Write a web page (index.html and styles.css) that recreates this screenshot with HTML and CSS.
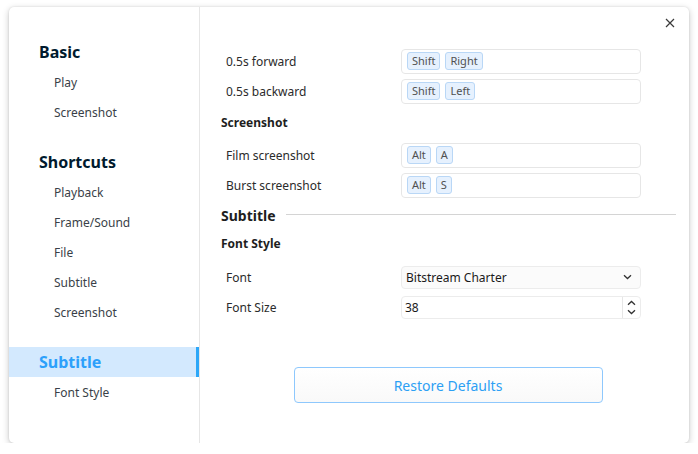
FILE: index.html
```html
<!DOCTYPE html>
<html>
<head>
<meta charset="utf-8">
<link rel="stylesheet" href="styles.css">
</head>
<body>
<div class="window">
  <nav class="sidebar">
    <div class="group">
      <div class="nav-head">Basic</div>
      <div class="nav-item">Play</div>
      <div class="nav-item">Screenshot</div>
    </div>
    <div class="group">
      <div class="nav-head">Shortcuts</div>
      <div class="nav-item">Playback</div>
      <div class="nav-item">Frame/Sound</div>
      <div class="nav-item">File</div>
      <div class="nav-item">Subtitle</div>
      <div class="nav-item">Screenshot</div>
    </div>
    <div class="group">
      <div class="nav-head active">Subtitle</div>
      <div class="nav-item">Font Style</div>
    </div>
  </nav>
  <main class="content">
    <button class="close" aria-label="Close">
      <svg width="10" height="10" viewBox="0 0 10 10"><path d="M1 1L9 9M9 1L1 9" stroke="#3a3a3a" stroke-width="1.2" fill="none"/></svg>
    </button>
    <div class="row">
      <span class="label">0.5s forward</span>
      <div class="field keys"><span class="key">Shift</span><span class="key">Right</span></div>
    </div>
    <div class="row">
      <span class="label">0.5s backward</span>
      <div class="field keys"><span class="key">Shift</span><span class="key">Left</span></div>
    </div>
    <div class="sub-head first">Screenshot</div>
    <div class="row">
      <span class="label">Film screenshot</span>
      <div class="field keys"><span class="key">Alt</span><span class="key">A</span></div>
    </div>
    <div class="row">
      <span class="label">Burst screenshot</span>
      <div class="field keys"><span class="key">Alt</span><span class="key">S</span></div>
    </div>
    <div class="section-head"><span>Subtitle</span><span class="rule"></span></div>
    <div class="sub-head">Font Style</div>
    <div class="row form">
      <span class="label">Font</span>
      <div class="field select">
        <span class="value">Bitstream Charter</span>
        <svg class="chev" width="9" height="6" viewBox="0 0 9 6"><path d="M1 1.2L4.5 4.5L8 1.2" stroke="#333" stroke-width="1.3" fill="none"/></svg>
      </div>
    </div>
    <div class="row">
      <span class="label">Font Size</span>
      <div class="field spin">
        <span class="value">38</span>
        <span class="spin-btns">
          <svg width="9" height="6" viewBox="0 0 9 6"><path d="M1 4.8L4.5 1.5L8 4.8" stroke="#333" stroke-width="1.3" fill="none"/></svg>
          <svg width="9" height="6" viewBox="0 0 9 6"><path d="M1 1.2L4.5 4.5L8 1.2" stroke="#333" stroke-width="1.3" fill="none"/></svg>
        </span>
      </div>
    </div>
    <div class="actions">
      <button class="restore">Restore Defaults</button>
    </div>
  </main>
</div>
</body>
</html>
```

FILE: styles.css
```css
* { box-sizing: border-box; }
html, body { margin: 0; padding: 0; background: #ffffff; }
body {
  font-family: "Noto Sans", "Open Sans", sans-serif;
  font-size: 12px;
  color: #303030;
}
.window {
  margin: 7px 0 0 9px;
  width: 680px;
  height: 436px;
  border-radius: 5px;
  background: #fff;
  box-shadow: 0 2px 7px rgba(0,0,0,0.22), 0 0 2px rgba(0,0,0,0.12);
  display: flex;
  overflow: hidden;
}
.sidebar {
  width: 191px;
  flex: none;
  border-right: 1px solid #e6e6e6;
  padding-top: 30px;
  display: flex;
  flex-direction: column;
  gap: 20px;
}
.nav-head {
  height: 30px;
  line-height: 30px;
  padding-left: 30px;
  font-size: 16px;
  font-weight: 700;
  color: #001a2e;
}
.nav-head.active {
  background: #d3e9fe;
  color: #2ca0fb;
  box-shadow: inset -3px 0 0 #2ca7f8;
}
.nav-item {
  height: 30px;
  line-height: 30px;
  padding-top: 1px;
  padding-left: 45px;
  font-size: 12px;
  color: #3a3f48;
}
.content {
  position: relative;
  flex: 1;
  padding: 39px 13px 0 21px;
  display: flex;
  flex-direction: column;
}
.close {
  position: absolute;
  top: 5px;
  right: 8px;
  width: 22px;
  height: 22px;
  border: 0;
  background: transparent;
  padding: 0;
  display: flex;
  align-items: center;
  justify-content: center;
}
.row {
  height: 30px;
  display: flex;
  align-items: center;
}
.row.form { margin-top: 8px; }
.label {
  width: 180px;
  padding-left: 5px;
  flex: none;
  color: #2b2b2b;
}
.field {
  width: 240px;
  border: 1px solid #e6e6e6;
  border-radius: 4px;
  background: #fff;
  display: flex;
  align-items: center;
}
.keys {
  height: 25px;
  padding-left: 5px;
  gap: 5px;
}
.key {
  height: 18px;
  line-height: 16px;
  padding: 0 4px;
  border: 1px solid #b9d7f6;
  border-radius: 3px;
  background: #e6f1fe;
  font-size: 11px;
  color: #505050;
}
.sub-head {
  height: 20px;
  line-height: 20px;
  font-weight: 700;
  font-size: 12px;
  color: #1e1e1e;
  margin-top: 7px;
  margin-bottom: 0;
}
.sub-head.first { margin-top: 7px; margin-bottom: 7px; }
.section-head {
  height: 24px;
  margin-top: 3px;
  display: flex;
  align-items: center;
  gap: 10px;
  font-size: 14px;
  font-weight: 700;
  color: #1e1e1e;
}
.rule {
  flex: 1;
  height: 1px;
  background: #d4d4d4;
  margin-top: -1px;
}
.select {
  height: 23px;
  padding: 0 8px 0 4px;
  background: #fbfbfb;
  border-color: #ececec;
  justify-content: space-between;
}
.value { color: #1a1a1a; font-size: 12px; }
.spin {
  height: 23px;
  padding-left: 3px;
  justify-content: space-between;
  border-color: #ececec;
}
.spin-btns {
  align-self: stretch;
  width: 18px;
  border-left: 1px solid #e6e6e6;
  display: flex;
  flex-direction: column;
  align-items: center;
  justify-content: center;
  gap: 3px;
}
.spin-btns svg { display: block; }
.actions {
  margin-top: 45px;
  display: flex;
  justify-content: center;
  padding-right: 1px;
}
.restore {
  width: 309px;
  height: 36px;
  border: 1px solid #8ec8fd;
  border-radius: 4px;
  background: linear-gradient(#ffffff, #f9f9f9);
  color: #2ca0f4;
  font-family: "Noto Sans", "Open Sans", sans-serif;
  font-size: 14px;
  padding: 0;
}
```
